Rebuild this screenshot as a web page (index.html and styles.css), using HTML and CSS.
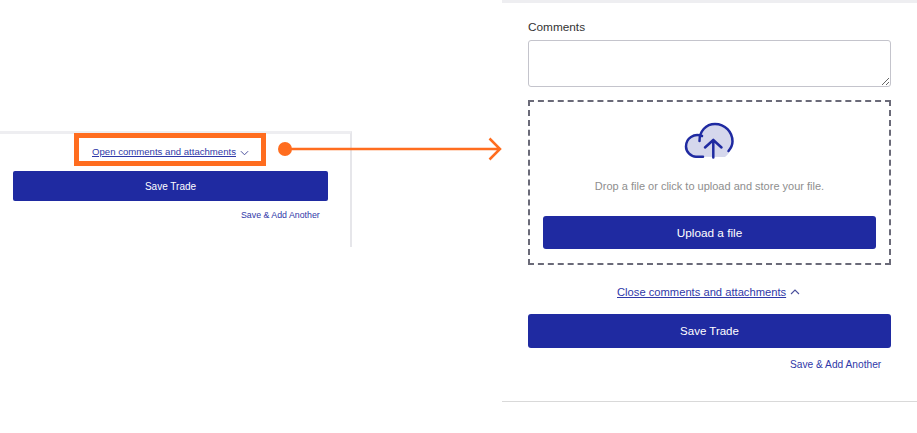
FILE: index.html
```html
<!DOCTYPE html>
<html lang="en">
<head>
<meta charset="utf-8">
<title>Comments and attachments</title>
<link rel="stylesheet" href="styles.css">
</head>
<body>
<main class="page">
  <section class="panel-small">
    <div class="small-link-row">
      <a class="toggle toggle-small" href="#">Open comments and attachments</a>
      <svg class="chev-small" viewBox="0 0 10 6" aria-hidden="true"><path d="M1 1l4 4 4-4"/></svg>
    </div>
    <button class="btn btn-small" type="button">Save Trade</button>
    <div class="another-row-small"><a class="another another-small" href="#">Save &amp; Add Another</a></div>
  </section>

  <section class="panel-large">
    <label class="label" for="comments">Comments</label>
    <textarea class="comments" id="comments"></textarea>
    <div class="drop">
      <svg class="cloud" viewBox="0 0 50 38" aria-hidden="true">
        <path class="cloud-fill" d="M12 35.700C7 35.700 2 31 2 25.500C2 17 10 12 16 15C17 9 22 3 31 3C41 3 48.500 11 48.500 20.500C48.500 26 46 32 41 36Z"/>
        <path class="cloud-line" d="M18 15C10 12 2 17 2 25.500C2 31 7 35.700 12 35.700H19"/>
        <path class="cloud-line" d="M15.500 20C15.500 10 22 3 31 3C41 3 48.500 11 48.500 20.500C48.500 24 47 27 44.500 30"/>
        <path class="cloud-line" d="M29.300 36.500V19M21 26.500L29.300 19L37.500 26.500"/>
      </svg>
      <p class="hint">Drop a file or click to upload and store your file.</p>
      <button class="btn btn-upload" type="button">Upload a file</button>
    </div>
    <div class="close-row">
      <a class="toggle toggle-large" href="#">Close comments and attachments</a>
      <svg class="chev-large" viewBox="0 0 10 6" aria-hidden="true"><path d="M1 5l4-4 4 4"/></svg>
    </div>
    <button class="btn btn-save" type="button">Save Trade</button>
    <div class="another-row-large"><a class="another another-large" href="#">Save &amp; Add Another</a></div>
  </section>
</main>

<div class="callout-box"></div>
<svg class="callout-arrow" viewBox="0 0 230 30" aria-hidden="true">
  <circle cx="8" cy="15" r="7"/>
  <path d="M8 15H223M212.500 4.500L223 15L212.500 25.500"/>
</svg>
</body>
</html>
```

FILE: styles.css
```css
* { box-sizing: border-box; }

html, body {
  margin: 0;
  height: 433px;
  overflow: hidden;
  background: #fff;
}

body {
  position: relative;
  font-family: "Liberation Sans", Arial, sans-serif;
}

.page {
  display: flex;
  align-items: flex-start;
  width: 917px;
}

.panel-small {
  width: 352px;
  height: 116px;
  margin-top: 131px;
  border-top: 3px solid #eeeef1;
  border-right: 2px solid #e6e6ea;
}

.small-link-row {
  display: flex;
  align-items: center;
  height: 37px;
  padding-left: 92px;
  padding-bottom: 2px;
}

.toggle { color: #2f38a8; }

.toggle-small { font-size: 9.600px; }

.chev-small {
  width: 9px;
  height: 6px;
  margin-left: 4px;
  margin-top: 3px;
}

.chev-small path, .chev-large path {
  fill: none;
  stroke: #4a4f9c;
  stroke-width: 1.100;
}

.btn {
  display: block;
  border: 0;
  color: #fff;
  background: #1f2aa1;
  font-family: inherit;
  text-align: center;
  padding: 0;
}

.btn-small {
  width: 315px;
  height: 30px;
  margin-left: 13px;
  border-radius: 2px;
  font-size: 10px;
}

.another { color: #2f38a8; text-decoration: none; }

.another-row-small {
  margin-top: 6px;
  padding-left: 241px;
  line-height: 11px;
}

.another-small { font-size: 8.800px; }

.panel-large {
  width: 415px;
  height: 402px;
  margin-left: 150px;
  padding: 0 26px;
  border-top: 3px solid #eeeef1;
  border-bottom: 1px solid #d9d9d9;
}

.label {
  display: block;
  margin-top: 17px;
  font-size: 11.800px;
  line-height: 14px;
  color: #333;
}

.comments {
  display: block;
  width: 363px;
  height: 47px;
  margin-top: 6px;
  border: 1px solid #c4c4cc;
  border-radius: 3px;
  background: #fff;
}

.drop {
  display: flex;
  flex-direction: column;
  align-items: center;
  width: 363px;
  height: 165px;
  margin-top: 13px;
  padding-top: 19px;
  border: 2px dashed #6a6a78;
}

.cloud {
  width: 50px;
  height: 38px;
  margin-left: -1px;
}

.cloud-fill { fill: #d5d7ec; }

.cloud-line {
  fill: none;
  stroke: #1f2aa1;
  stroke-width: 2.500;
  stroke-linecap: round;
  stroke-linejoin: round;
}

.hint {
  margin: 21px 0 0;
  font-size: 11px;
  line-height: 13px;
  color: #8e8e8e;
}

.btn-upload {
  width: 333px;
  height: 33px;
  margin-top: 23px;
  border-radius: 3px;
  font-size: 11.800px;
}

.close-row {
  display: flex;
  align-items: center;
  padding-left: 89px;
  height: 14px;
  margin-top: 20px;
}

.toggle-large { font-size: 11.200px; }

.chev-large {
  width: 10px;
  height: 6px;
  margin-left: 4px;
}

.btn-save {
  width: 363px;
  height: 34px;
  margin-top: 15px;
  border-radius: 3px;
  font-size: 11.500px;
}

.another-row-large {
  margin-top: 8px;
  padding-left: 262px;
  line-height: 14px;
}

.another-large { font-size: 10.200px; }

.callout-box {
  position: absolute;
  left: 74px;
  top: 133px;
  width: 192px;
  height: 33px;
  border: 5px solid #ff6d1f;
}

.callout-arrow {
  position: absolute;
  left: 277px;
  top: 134px;
  width: 230px;
  height: 30px;
}

.callout-arrow circle { fill: #ff6d1f; }

.callout-arrow path {
  fill: none;
  stroke: #ff6d1f;
  stroke-width: 2.500;
}
```
